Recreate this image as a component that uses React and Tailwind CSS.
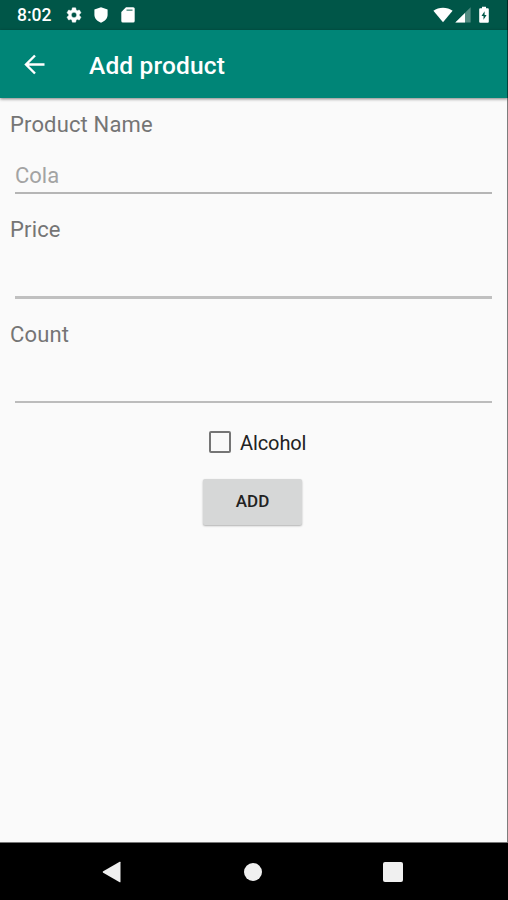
const GEAR =
  "M19.14 12.94c.04-.3.06-.61.06-.94 0-.32-.02-.64-.07-.94l2.03-1.58c.18-.14.23-.41.12-.61l-1.92-3.32c-.12-.22-.37-.29-.59-.22l-2.39.96c-.5-.38-1.03-.7-1.62-.94l-.36-2.54c-.04-.24-.24-.41-.48-.41h-3.84c-.24 0-.43.17-.47.41l-.36 2.54c-.59.24-1.13.57-1.62.94l-2.39-.96c-.22-.08-.47 0-.59.22L2.74 8.87c-.12.21-.08.47.12.61l2.03 1.58c-.05.3-.09.63-.09.94s.02.64.07.94l-2.03 1.58c-.18.14-.23.41-.12.61l1.92 3.32c.12.22.37.29.59.22l2.39-.96c.5.38 1.03.7 1.62.94l.36 2.54c.05.24.24.41.48.41h3.84c.24 0 .44-.17.47-.41l.36-2.54c.59-.24 1.13-.56 1.62-.94l2.39.96c.22.08.47 0 .59-.22l1.92-3.32c.12-.22.07-.47-.12-.61l-2.01-1.58zM12 15.6c-1.98 0-3.6-1.62-3.6-3.6s1.62-3.6 3.6-3.6 3.6 1.62 3.6 3.6-1.62 3.6-3.6 3.6z";

function StatusBar() {
  return (
    <div className="flex h-[30px] items-center bg-[#005648] pl-[17px] pr-[19px] text-white">
      <span className="w-[48px] text-[17.5px] font-medium leading-[30px]">8:02</span>
      <svg className="h-[18px] w-[18px]" viewBox="0 0 24 24" fill="currentColor" stroke="currentColor" strokeWidth=".6"><path d={GEAR} /></svg>
      <svg className="ml-[11px] h-4 w-[14px]" viewBox="0 0 14 16" fill="currentColor">
        <path d="M7 .2 13.6 2.4v5.4c0 3.7-2.600 6.400-6.600 8C3 14.200.4 11.500.4 7.800V2.400z" />
      </svg>
      <svg className="ml-[13px] h-4 w-[14px]" viewBox="0 0 14 16" fill="currentColor">
        <path d="M5 .3h7.200q1.500 0 1.500 1.500v12.200q0 1.500-1.500 1.500H1.800Q.3 15.500.3 14V5z" />
        <path d="M5.500 3.200h6" stroke="#005648" strokeWidth="1.600" strokeOpacity=".6" />
      </svg>
      <div className="ml-auto flex items-center">
        <svg className="h-[16px] w-5" viewBox="0 0 20 16" fill="currentColor">
          <path d="M.4 3.800C5.700-.3 14.300-.3 19.600 3.800L10 15.200z" />
        </svg>
        <svg className="ml-[2px] h-[16px] w-4" viewBox="0 0 16 16" fill="currentColor">
          <path d="M15.600.3v15.200H.300z" opacity=".32" />
          <path d="M10 5.900v9.600H.300z" />
        </svg>
        <svg className="ml-[8px] h-[18px] w-[10px]" viewBox="0 0 10 18" fill="currentColor">
          <path fillRule="evenodd" d="M3 .7h4v1.500h1.800q1 0 1 1v12.500q0 1-1 1H1.200q-1 0-1-1V3.200q0-1 1-1H3zM5.600 5.200 2.500 10h2v3.800L7.600 9H5.600z" />
        </svg>
      </div>
    </div>
  );
}

function Field({ label, placeholder, line }) {
  return (
    <label className="block h-[105px]">
      <span className="block h-[39px] pl-[10px] text-[22px] leading-[26px] tracking-[0.15px] text-[#757575]">{label}</span>
      <span className="ml-[15px] mr-[16px] block">
        <input
          className={`block w-full bg-transparent pb-[4px] pt-[11px] text-[22px] leading-[26px] text-[#555] outline-none placeholder:text-[#a3a3a3] ${line}`}
          placeholder={placeholder}
        />
      </span>
    </label>
  );
}

export default function App() {
  return (
    <div className="relative flex h-[900px] w-[508px] flex-col overflow-hidden bg-[#fafafa] font-[Roboto,sans-serif]">
      <StatusBar />
      <header className="flex h-[68px] shrink-0 items-center bg-[#008577] pl-[24px] text-white shadow-[0_1px_3px_rgba(0,0,0,0.5)]">
        <svg className="mt-px h-[22px] w-[22px]" viewBox="0 0 22 22" fill="none" stroke="currentColor" strokeWidth="2.4">
          <path d="M20.500 10.500H2.500M11 1.500l-9 9 9 9" />
        </svg>
        <h1 className="ml-[43px] mt-[4px] text-[24.5px] font-medium leading-[30px] tracking-[0.15px]">Add product</h1>
      </header>
      <main className="flex-1 pt-[14px]">
        <Field label="Product Name" placeholder="Cola" line="h-[43px] border-b-2 border-[#b5b5b5]" />
        <Field label="Price" line="h-[43px] border-b-[3px] border-[#c0c0c0]" />
        <Field label="Count" line="h-[42px] border-b-2 border-[#bcbcbc]" />
        <label className="ml-[209px] mt-[2px] flex h-[26px] items-center">
          <span className="h-[22px] w-[22px] rounded-[2px] border-2 border-[#757575]" />
          <span className="ml-[9px] pt-px text-[20px] leading-[26px] tracking-[-0.1px] text-[#222]">Alcohol</span>
        </label>
        <button className="ml-[203px] mt-[24px] block h-[46px] w-[99px] rounded-[2px] bg-[#d6d7d7] text-[17px] font-medium text-[#222] shadow-[0_1px_2px_rgba(0,0,0,0.3)]">
          ADD
        </button>
      </main>
      <nav className="flex h-[58px] shrink-0 items-center border-t border-[#777] bg-black pl-[102px] text-[#f0f0f0]">
        <svg className="h-[22px] w-[19px]" viewBox="0 0 19 22" fill="currentColor"><path d="M18.500 1.200v19.600q0 .8-.8.400L1.200 11.800q-1.200-.8 0-1.600L17.700.800q.8-.4.8.4z" /></svg>
        <span className="ml-[123px] h-[18px] w-[18px] rounded-full bg-[#f0f0f0]" />
        <span className="ml-[121px] h-[20px] w-[20px] rounded-[2px] bg-[#f0f0f0]" />
      </nav>
      <div className="absolute right-0 top-0 h-[842px] w-px bg-black/50" />
    </div>
  );
}
